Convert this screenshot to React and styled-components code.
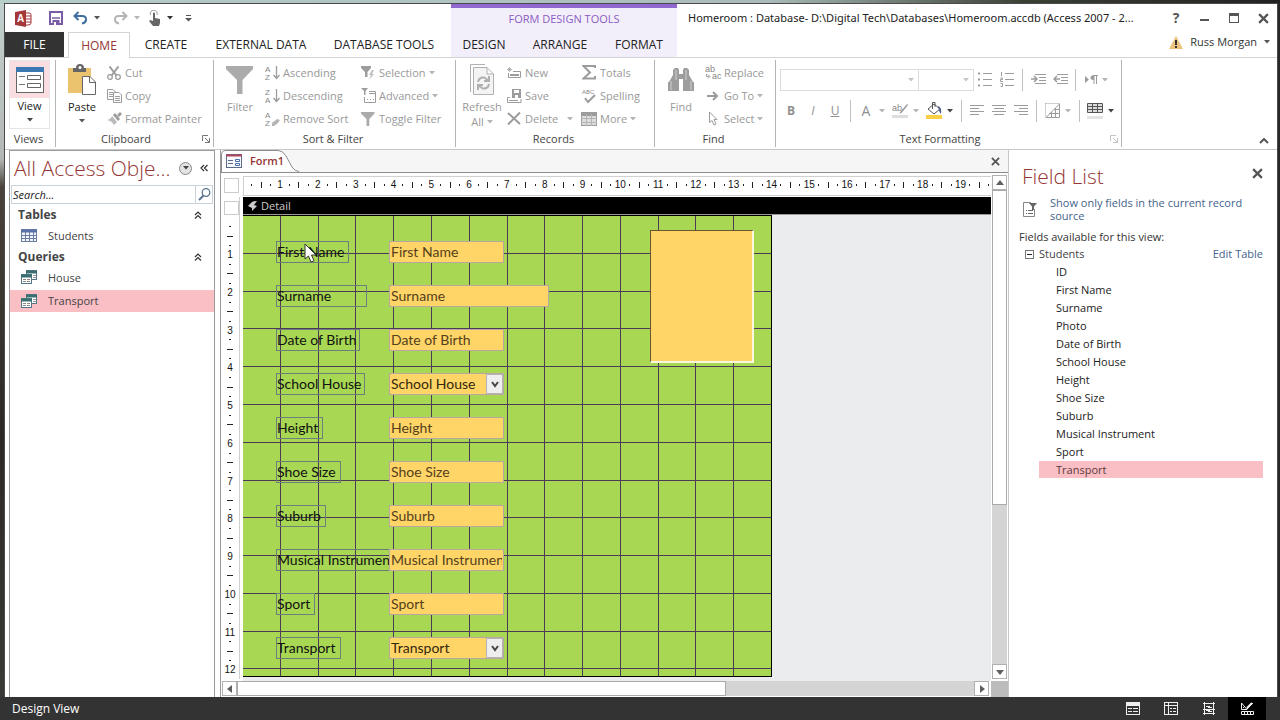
import React from 'react';
import styled, { createGlobalStyle, css } from 'styled-components';

const ribbonTabs = [
    { name: 'CREATE', width: 72 },
    { name: 'EXTERNAL DATA', width: 118 },
    { name: 'DATABASE TOOLS', width: 128 },
];

const designTabs = [
    { name: 'DESIGN', width: 66 },
    { name: 'ARRANGE', width: 86 },
    { name: 'FORMAT', width: 72 },
];

const formFields = [
    { id: 'first-name', label: 'First Name', labelWidth: 73 },
    { id: 'surname', label: 'Surname', labelWidth: 91, wide: true },
    { id: 'birth', label: 'Date of Birth', labelWidth: 84 },
    { id: 'house', label: 'School House', labelWidth: 89, combo: true },
    { id: 'height', label: 'Height', labelWidth: 47 },
    { id: 'shoe', label: 'Shoe Size', labelWidth: 65 },
    { id: 'suburb', label: 'Suburb', labelWidth: 50 },
    { id: 'instrument', label: 'Musical Instrument', labelWidth: 120 },
    { id: 'sport', label: 'Sport', labelWidth: 39 },
    { id: 'transport', label: 'Transport', labelWidth: 65, combo: true },
];

const listFields = [
    'ID', 'First Name', 'Surname', 'Photo', 'Date of Birth', 'School House', 'Height',
    'Shoe Size', 'Suburb', 'Musical Instrument', 'Sport', 'Transport',
];

const range = (from, to) => Array.from({ length: to - from + 1 }, (_, i) => from + i);

export default function App() {
    return (
        <Desktop>
            <GlobalStyle />
            <AppWindow>
                <Header />
                <Ribbon />
                <Workspace>
                    <NavigationPane />
                    <FormDesigner />
                    <FieldList />
                </Workspace>
            </AppWindow>
            <StatusBar />
        </Desktop>
    );
}

function Header() {
    return (
        <HeaderGrid>
            <HeaderColumn>
                <QuickAccess>
                    <QuickButton aria-label="Access" $width={34}><AccessLogo /></QuickButton>
                    <QuickButton aria-label="Save" $width={24}><SaveIcon /></QuickButton>
                    <QuickButton aria-label="Undo" $width={40}><UndoIcon /><Caret color="#555" /></QuickButton>
                    <QuickButton aria-label="Redo" $width={36}><RedoIcon /><Caret color="#b5b5b5" /></QuickButton>
                    <QuickButton aria-label="Touch mode" $width={36}><TouchIcon /><Caret color="#333" /></QuickButton>
                    <QuickButton aria-label="Customise" $width={28}><CustomiseIcon /></QuickButton>
                </QuickAccess>
                <TabRow>
                    <FileTab>FILE</FileTab>
                    <HomeTab>HOME</HomeTab>
                    {ribbonTabs.map(t => <Tab key={t.name} $width={t.width}>{t.name}</Tab>)}
                </TabRow>
            </HeaderColumn>
            <ContextColumn>
                <ContextTitle>FORM DESIGN TOOLS</ContextTitle>
                <TabRow>
                    {designTabs.map(t => <Tab key={t.name} $width={t.width}>{t.name}</Tab>)}
                </TabRow>
            </ContextColumn>
            <HeaderColumn>
                <TitleRow>
                    <WindowTitle>Homeroom : Database- D:\Digital Tech\Databases\Homeroom.accdb (Access 2007 - 2...</WindowTitle>
                    <WindowButton aria-label="Help"><HelpMark>?</HelpMark></WindowButton>
                    <WindowButton aria-label="Minimise"><MinimiseIcon /></WindowButton>
                    <WindowButton aria-label="Restore"><RestoreIcon /></WindowButton>
                    <WindowButton aria-label="Close"><CloseIcon size={11} weight={2} /></WindowButton>
                </TitleRow>
                <UserRow>
                    <WarningIcon />
                    <span>Russ Morgan</span>
                    <Caret color="#555" />
                </UserRow>
            </HeaderColumn>
        </HeaderGrid>
    );
}

function SmallCommand({ icon, children, caret, gap }) {
    return (
        <CommandButton>
            <IconSlot>{icon}</IconSlot>
            {children}
            {caret && <CaretSlot $gap={gap || 3}><Caret color="#b5b5b5" /></CaretSlot>}
        </CommandButton>
    );
}

function Ribbon() {
    return (
        <RibbonBar>
            <Group $width={51}>
                <GroupBody>
                    <ViewButton>
                        <ViewTop><ViewIcon /></ViewTop>
                        <LargeText>View</LargeText>
                        <Caret color="#444" />
                    </ViewButton>
                </GroupBody>
                <GroupLabel><span>Views</span></GroupLabel>
            </Group>
            <Group $width={158}>
                <GroupBody>
                    <LargeButton $dark>
                        <LargeIcon><PasteIcon /></LargeIcon>
                        <LargeText>Paste</LargeText>
                        <Caret color="#555" />
                    </LargeButton>
                    <CommandColumn $width={106}>
                        <SmallCommand icon={<CutIcon />}>Cut</SmallCommand>
                        <SmallCommand icon={<CopyIcon />}>Copy</SmallCommand>
                        <SmallCommand icon={<BrushIcon />}>Format Painter</SmallCommand>
                    </CommandColumn>
                </GroupBody>
                <GroupLabel><span>Clipboard</span><LauncherIcon color="#777" /></GroupLabel>
            </Group>
            <Group $width={242}>
                <GroupBody>
                    <LargeButton>
                        <LargeIcon><FunnelIcon size={28} /></LargeIcon>
                        <LargeText>Filter</LargeText>
                    </LargeButton>
                    <CommandColumn $width={96}>
                        <SmallCommand icon={<SortIcon top="A" bottom="Z" />}>Ascending</SmallCommand>
                        <SmallCommand icon={<SortIcon top="Z" bottom="A" />}>Descending</SmallCommand>
                        <SmallCommand icon={<SortIcon top="A" bottom="Z" eraser />}>Remove Sort</SmallCommand>
                    </CommandColumn>
                    <CommandColumn $width={92}>
                        <SmallCommand icon={<SelectionIcon />} caret>Selection</SmallCommand>
                        <SmallCommand icon={<AdvancedIcon />} caret>Advanced</SmallCommand>
                        <SmallCommand icon={<FunnelIcon size={14} />}>Toggle Filter</SmallCommand>
                    </CommandColumn>
                </GroupBody>
                <GroupLabel><span>Sort &amp; Filter</span></GroupLabel>
            </Group>
            <Group $width={199}>
                <GroupBody>
                    <LargeButton>
                        <LargeIcon><RefreshIcon /></LargeIcon>
                        <LargeText>Refresh</LargeText>
                        <LargeText>All <Caret color="#b5b5b5" /></LargeText>
                    </LargeButton>
                    <CommandColumn $width={75}>
                        <SmallCommand icon={<NewIcon />}>New</SmallCommand>
                        <SmallCommand icon={<SaveRecordIcon />}>Save</SmallCommand>
                        <SmallCommand icon={<DeleteIcon />} caret gap={9}>Delete</SmallCommand>
                    </CommandColumn>
                    <CommandColumn $width={68}>
                        <SmallCommand icon={<SigmaIcon />}>Totals</SmallCommand>
                        <SmallCommand icon={<SpellingIcon />}>Spelling</SmallCommand>
                        <SmallCommand icon={<MoreIcon />} caret>More</SmallCommand>
                    </CommandColumn>
                </GroupBody>
                <GroupLabel><span>Records</span></GroupLabel>
            </Group>
            <Group $width={121}>
                <GroupBody>
                    <LargeButton>
                        <LargeIcon><BinocularsIcon /></LargeIcon>
                        <LargeText>Find</LargeText>
                    </LargeButton>
                    <CommandColumn $width={70}>
                        <SmallCommand icon={<ReplaceIcon />}>Replace</SmallCommand>
                        <SmallCommand icon={<GoToIcon />} caret>Go To</SmallCommand>
                        <SmallCommand icon={<SelectIcon />} caret>Select</SmallCommand>
                    </CommandColumn>
                </GroupBody>
                <GroupLabel><span>Find</span></GroupLabel>
            </Group>
            <Group $width={346}>
                <FormatRows>
                    <ToolRow>
                        <FontCombo $width={139}>
                            <select aria-label="Font"><option /></select>
                            <Caret color="#c4c4c4" />
                        </FontCombo>
                        <FontCombo $width={55}>
                            <select aria-label="Font size"><option /></select>
                            <Caret color="#c4c4c4" />
                        </FontCombo>
                        <Tool aria-label="Bullets"><BulletsIcon /></Tool>
                        <Tool aria-label="Numbering"><BulletsIcon numbered /></Tool>
                        <Divider />
                        <Tool aria-label="Increase indent"><IndentIcon /></Tool>
                        <Tool aria-label="Decrease indent"><IndentIcon back /></Tool>
                        <Divider />
                        <Tool aria-label="Text direction"><DirectionIcon /></Tool>
                        <Caret color="#b5b5b5" />
                    </ToolRow>
                    <ToolRow>
                        <Tool><b>B</b></Tool>
                        <Tool><i>I</i></Tool>
                        <Tool><u>U</u></Tool>
                        <Divider />
                        <Tool $big>A</Tool><ToolCaret><Caret color="#b5b5b5" /></ToolCaret>
                        <Tool aria-label="Highlight"><HighlightIcon /></Tool><ToolCaret><Caret color="#b5b5b5" /></ToolCaret>
                        <Tool aria-label="Background colour"><BucketIcon /></Tool><ToolCaret><Caret color="#444" /></ToolCaret>
                        <Divider />
                        <Tool aria-label="Align left"><AlignIcon kind="left" /></Tool>
                        <Tool aria-label="Centre"><AlignIcon kind="center" /></Tool>
                        <Tool aria-label="Align right"><AlignIcon kind="right" /></Tool>
                        <Divider />
                        <Tool aria-label="Gridlines"><GridlinesIcon /></Tool><ToolCaret><Caret color="#b5b5b5" /></ToolCaret>
                        <Divider />
                        <Tool aria-label="Alternate row colour"><RowColourIcon /></Tool><ToolCaret><Caret color="#444" /></ToolCaret>
                    </ToolRow>
                </FormatRows>
                <GroupLabel><span>Text Formatting</span><LauncherIcon color="#c4c4c4" /></GroupLabel>
            </Group>
            <CollapseButton aria-label="Collapse ribbon">
                <svg width="10" height="6"><path d="M1 5 L5 1 L9 5" fill="none" stroke="#555" strokeWidth="2" /></svg>
            </CollapseButton>
        </RibbonBar>
    );
}

function NavigationPane() {
    return (
        <NavPanel>
            <NavHeader>
                <PaneTitle>All Access Obje...</PaneTitle>
                <RoundButton aria-label="Choose category"><Caret color="#444" /></RoundButton>
                <PlainButton aria-label="Shutter bar"><ChevronsIcon /></PlainButton>
            </NavHeader>
            <SearchBox>
                <input aria-label="Search" placeholder="Search..." />
                <PlainButton aria-label="Search objects"><SearchIcon /></PlainButton>
            </SearchBox>
            <NavGroup>Tables<ChevronsIcon up /></NavGroup>
            <NavItem href="#students"><TableIcon />Students</NavItem>
            <NavGroup>Queries<ChevronsIcon up /></NavGroup>
            <NavItem href="#house"><QueryIcon />House</NavItem>
            <NavItem href="#transport" $selected><QueryIcon />Transport</NavItem>
        </NavPanel>
    );
}

function RulerMarks({ from, to, vertical }) {
    return range(from, to).map(n => (
        <Centimetre key={n} $vertical={vertical}>
            <span><Mark $vertical={vertical} $size={2} /></span>
            <span><Mark $vertical={vertical} $size={6} /></span>
            <span><Mark $vertical={vertical} $size={2} /></span>
            <span>{n}</span>
        </Centimetre>
    ));
}

function FormDesigner() {
    const unit = 529 / 14;
    return (
        <Designer>
            <DocumentTabs>
                <DocumentTab>
                    <svg width="78" height="22" viewBox="0 0 78 22">
                        <path d="M0.5 22 V5 Q0.5 0.5 5 0.5 H57 Q62 0.5 65 6 L71 17 Q74 21.5 78 21.5" fill="#fff" stroke="#8c8c8c" />
                    </svg>
                    <DocumentName><FormIcon />Form1</DocumentName>
                </DocumentTab>
                <CloseDocument aria-label="Close form"><CloseIcon size={9} weight={2} /></CloseDocument>
            </DocumentTabs>
            <DesignGrid>
                <RulerCorner><Corner /></RulerCorner>
                <TopRuler><TopScale><RulerMarks from={1} to={20} /></TopScale></TopRuler>
                <VerticalScroll>
                    <ScrollButton aria-label="Scroll up"><Arrow dir="up" /></ScrollButton>
                    <VerticalThumb />
                    <ScrollTrack />
                    <ScrollButton aria-label="Scroll down"><Arrow dir="down" /></ScrollButton>
                </VerticalScroll>
                <SideRuler>
                    <Corner $short />
                    <SideScale><RulerMarks from={1} to={12} vertical /></SideScale>
                </SideRuler>
                <Surface>
                    <SectionBar>
                        <svg width="10" height="10"><path d="M0 5 L4 1 Q6 0 9 0 L6 4 L9 5 L4 10 V7 Z" fill="#ccc" /></svg>
                        Detail
                    </SectionBar>
                    <FormSection>
                        <GridLines aria-hidden="true">
                            {range(1, 13).map(n => <rect key={'v' + n} x={Math.round(n * unit) - 1} y="0" width="1" height="100%" />)}
                            {range(1, 12).map(n => <rect key={'h' + n} x="0" y={Math.round(n * unit) - 1} width="100%" height="1" />)}
                        </GridLines>
                        <FieldRows>
                            {formFields.map(f => (
                                <FieldRow key={f.id}>
                                    <LabelCell>
                                        <FieldLabel htmlFor={f.id} $width={f.labelWidth}>{f.label}</FieldLabel>
                                    </LabelCell>
                                    {f.combo ? (
                                        <ComboBox>
                                            <select id={f.id}><option>{f.label}</option></select>
                                            <ComboArrow>
                                                <svg width="8" height="7"><path d="M1 1 L4 5 L7 1" fill="none" stroke="#444" strokeWidth="2" /></svg>
                                            </ComboArrow>
                                        </ComboBox>
                                    ) : (
                                        <TextBox id={f.id} defaultValue={f.label} $wide={f.wide} />
                                    )}
                                </FieldRow>
                            ))}
                        </FieldRows>
                        <PhotoFrame />
                        <Pointer width="14" height="21" viewBox="0 0 14 21">
                            <path d="M1 1 V16 L4.500 13 L7 19 L10 17.800 L7.500 12 H12 Z" fill="#fff" stroke="#333" strokeWidth="1" />
                        </Pointer>
                    </FormSection>
                </Surface>
                <HorizontalScroll>
                    <ScrollButton aria-label="Scroll left"><Arrow dir="left" /></ScrollButton>
                    <HorizontalThumb />
                    <ScrollTrack />
                    <ScrollButton aria-label="Scroll right"><Arrow dir="right" /></ScrollButton>
                </HorizontalScroll>
                <ScrollCorner />
            </DesignGrid>
        </Designer>
    );
}

function FieldList() {
    return (
        <FieldPanel>
            <FieldHeader>
                <PaneTitle>Field List</PaneTitle>
                <PanelClose aria-label="Close field list"><CloseIcon size={11} weight={2} /></PanelClose>
            </FieldHeader>
            <SourceRow>
                <SourceIcon />
                <BlueLink href="#source">Show only fields in the current record source</BlueLink>
            </SourceRow>
            <Available>Fields available for this view:</Available>
            <TreeRow>
                <svg width="9" height="9"><rect x="0.5" y="0.5" width="8" height="8" fill="#fff" stroke="#777" /><path d="M2 4.500 H7" stroke="#222" /></svg>
                <span>Students</span>
                <BlueLink href="#edit">Edit Table</BlueLink>
            </TreeRow>
            <FieldItems>
                {listFields.map(name => (
                    <FieldItem key={name} $selected={name === 'Transport'}>{name}</FieldItem>
                ))}
            </FieldItems>
        </FieldPanel>
    );
}

function StatusBar() {
    return (
        <StatusRow>
            <StatusText>Design View</StatusText>
            <StatusButton aria-label="Form view">
                <svg width="14" height="13" fill="none" stroke="#eee"><rect x="0.5" y="0.5" width="13" height="12" /><path d="M0 2.500 H14 M0 1.500 H14 M0 3.500 H14 M2 6.500 H6 M2 9.500 H6 M7 6.500 H12 M7 9.500 H12" /></svg>
            </StatusButton>
            <StatusButton aria-label="Layout view">
                <svg width="14" height="13" fill="none" stroke="#eee"><rect x="0.5" y="0.5" width="13" height="12" /><path d="M0 3.500 H14 M4.500 0 V13 M6 6.500 H8 M6 9.500 H8 M9 6.500 H12 M9 9.500 H12" /></svg>
            </StatusButton>
            <StatusButton aria-label="Report view">
                <svg width="12" height="13" fill="none" stroke="#eee"><path d="M1.500 0 V13 M10.500 0 V13 M0 1.500 H12 M0 11.500 H12 M3 4.500 H7 M5 5.500 H9 M3 8.500 H7 M5 9.500 H9 M0 7.500 H12" /></svg>
            </StatusButton>
            <StatusButton aria-label="Design view" $active>
                <svg width="15" height="14" fill="none" stroke="#eee"><path d="M1.500 1 V7.500 H7 Z M3.500 5 V6 M6 8 L13 1" /><path d="M7 6 L12 1" strokeWidth="2" /><path d="M1.500 9.500 H13.500 V12.500 H1.500 Z M4.500 10 V12 M7.500 10 V12 M10.500 10 V12" /></svg>
            </StatusButton>
        </StatusRow>
    );
}

/* icons */

const gray = '#9c9c9c';

const Caret = ({ color }) => <svg width="6" height="4"><path d="M0 0 H6 L3 3.500 Z" fill={color} /></svg>;

const CloseIcon = ({ size, weight }) => (
    <svg width={size} height={size} viewBox="0 0 10 10"><path d="M1 1 L9 9 M9 1 L1 9" stroke="#555" strokeWidth={weight} /></svg>
);

const arrows = { up: 'M0 6 L4 1 L8 6 Z', down: 'M0 2 L4 7 L8 2 Z', left: 'M6 0 L1 4 L6 8 Z', right: 'M2 0 L7 4 L2 8 Z' };
const Arrow = ({ dir }) => <svg width="8" height="8"><path d={arrows[dir]} fill="#606060" /></svg>;

const AccessLogo = () => (
    <svg width="17" height="17" viewBox="0 0 17 17">
        <path d="M10 3 H14 Q16 3 16 4.500 V13 Q16 15 13 15 H10 Z" fill="#fff" stroke="#a4373a" />
        <path d="M10 6 H16 M10 9 H16 M10 12 H16" stroke="#a4373a" />
        <path d="M0 2 L11 0 V17 L0 15 Z" fill="#a4373a" />
        <LogoText x="2" y="12">A</LogoText>
    </svg>
);

const SaveIcon = () => (
    <svg width="14" height="14" viewBox="0 0 14 14">
        <path d="M1 1 H13 V13 H1 Z" fill="#fff" stroke="#7a5ba8" strokeWidth="2" />
        <path d="M3 7 H11" stroke="#7a5ba8" strokeWidth="1.500" />
        <path d="M3.500 9 H10.500 V14 H3.500 Z" fill="#7a5ba8" /><path d="M5 11 H7 V14 H5 Z" fill="#fff" />
    </svg>
);

const UndoIcon = () => (
    <svg width="15" height="14" viewBox="0 0 15 14" fill="none" stroke="#3f6f9f" strokeWidth="2">
        <path d="M5.500 1 L1.500 5 L5.500 9" /><path d="M2 5 H9 Q13.500 5 13 9 Q12.500 12 9 12.500" />
    </svg>
);

const RedoIcon = () => (
    <svg width="15" height="14" viewBox="0 0 15 14" fill="none" stroke="#b5b5b5" strokeWidth="2">
        <path d="M9.500 1 L13.500 5 L9.500 9" /><path d="M13 5 H6 Q1.500 5 2 9 Q2.500 12 6 12.500" />
    </svg>
);

const TouchIcon = () => (
    <svg width="12" height="16" viewBox="0 0 12 16">
        <path d="M1.500 5 A3.500 3.500 0 1 1 8 5" fill="none" stroke="#999" />
        <path d="M4 3 Q5 2 6 3 V8 L11 9 V13 L10 16 H4 L0 11 L1.500 10 L4 11 Z" fill="#666" />
    </svg>
);

const CustomiseIcon = () => <svg width="7" height="7"><path d="M1 0.500 H6" stroke="#555" /><path d="M0 3 H7 L3.500 6.500 Z" fill="#555" /></svg>;

const MinimiseIcon = () => <svg width="10" height="11"><path d="M0 7 H9" stroke="#555" strokeWidth="2" /></svg>;

const RestoreIcon = () => <svg width="10" height="10"><rect x="0.5" y="0.5" width="9" height="9" fill="#fff" stroke="#555" /><path d="M0 1.500 H10" stroke="#555" strokeWidth="3" /></svg>;

const WarningIcon = () => (
    <svg width="14" height="13" viewBox="0 0 14 13">
        <path d="M7 0 L14 13 H0 Z" fill="#edc37c" /><path d="M7 4 V9 M7 10 V12" stroke="#333" strokeWidth="2" />
    </svg>
);

const ViewIcon = () => (
    <svg width="28" height="26" viewBox="0 0 28 26">
        <rect x="0.5" y="0.5" width="27" height="25" fill="#fff" stroke="#666" />
        <rect width="28" height="5" fill="#3c78b4" />
        <path d="M3 9.500 H9 M3 17.500 H9" stroke="#777" />
        <path d="M11.500 8.500 H24.500 V12.500 H11.500 Z M11.500 16.500 H24.500 V20.500 H11.500 Z" fill="none" stroke="#666" />
    </svg>
);

const PasteIcon = () => (
    <svg width="28" height="31" viewBox="0 0 28 31">
        <path d="M0 4 H23 V29 H0 Z" fill="#ebc36f" />
        <path d="M5 8 V4 H8 Q8 0 12 0 Q16 0 16 4 H18 V8 Z" fill="#666" /><circle cx="12" cy="3.500" r="1.500" fill="#fff" />
        <path d="M14.500 12.500 H22 L27.500 18 V30.500 H14.500 Z" fill="#fff" stroke="#666" /><path d="M21.500 12.500 V18.500 H27.500" fill="none" stroke="#666" />
    </svg>
);

const CutIcon = () => (
    <svg width="14" height="14" viewBox="0 0 14 14" fill="none" stroke={gray}>
        <path d="M2.500 0.500 L9.500 9.500 M11.500 0.500 L4.500 9.500" strokeWidth="2" />
        <circle cx="3" cy="11" r="2.300" strokeWidth="1.300" /><circle cx="11" cy="11" r="2.300" strokeWidth="1.300" />
    </svg>
);

const CopyIcon = () => (
    <svg width="15" height="14" viewBox="0 0 15 14" fill="#fff" stroke={gray}>
        <path d="M0.500 0.500 H6 L8.500 3 V10.500 H0.500 Z M2 3.500 H6 M2 5.500 H6 M2 7.500 H6" />
        <path d="M6.500 3.500 H12 L14.500 6 V13.500 H6.500 Z M8 7.500 H13 M8 9.500 H13 M8 11.500 H13" />
    </svg>
);

const BrushIcon = () => (
    <svg width="15" height="13" viewBox="0 0 15 13">
        <path d="M10 3 L13 0 L15 2 L12 5 Z" fill={gray} /><path d="M6 3 L8 1 L13 7 L11 9 Z" fill={gray} />
        <path d="M5 4 L10 10 L7 13 Q5 9 0 8 Q4 7 5 4 Z" fill="#bbb" />
    </svg>
);

const FunnelIcon = ({ size }) => (
    <svg width={size} height={size} viewBox="0 0 28 28"><path d="M0 0 H27 V3 L16.500 14 V28 H11 V14 L0 3 Z" fill="#ababab" /></svg>
);

const SortIcon = ({ top, bottom, eraser }) => (
    <svg width="15" height="18" viewBox="0 0 15 18">
        <SvgText x="0" y="8">{top}</SvgText>
        <SvgText x="0" y="16">{bottom}</SvgText>
        {eraser
            ? <path d="M7 13 L12 9 L15 10 L13 13 L9 16 L7 16 Z" fill="#b5b5b5" />
            : <path d="M11.500 2 V14 M8.500 11 L11.500 14.500 L14.500 11" fill="none" stroke={gray} strokeWidth="1.300" />}
    </svg>
);

const SelectionIcon = () => (
    <svg width="14" height="14" viewBox="0 0 14 14">
        <path d="M0 0 H10 V2 L6.500 6 V11 H4 V6 L0 2 Z" fill={gray} /><path d="M11 4 L8 9 H10 L8 14 L13 8 H11 L13 4 Z" fill="#c0c0c0" />
    </svg>
);

const AdvancedIcon = () => (
    <svg width="15" height="15" viewBox="0 0 15 15">
        <path d="M0 0 H7 L4.500 3 V7 H3 V3 Z" fill={gray} />
        <path d="M8 3.500 H14.500 V14.500 H3.500 V9 M8 5.500 H14" fill="none" stroke={gray} />
        <path d="M6 11.500 H7 M9 11.500 H10 M12 11.500 H13" stroke={gray} />
    </svg>
);

const RefreshIcon = () => (
    <svg width="25" height="31" viewBox="0 0 25 31" fill="none" stroke="#b0b0b0">
        <path d="M0.500 28 V0.500 H15" />
        <path d="M3.500 3.500 H17 L23.500 10 V30.500 H3.500 Z M17 3.500 V10 H23.500" fill="#f4f4f4" />
        <path d="M8 18 Q9 13 14 13.500 L18 16 M19 12 V17 H14 M19 20 Q18 25 13 24.500 L9 22 M8 26 V21 H13" strokeWidth="2" />
    </svg>
);

const NewIcon = () => (
    <svg width="14" height="12" viewBox="0 0 14 12" fill="none" stroke={gray}>
        <path d="M2.500 0 V5 M0 2.500 H5 M1 1 L4 4 M4 1 L1 4" strokeWidth="0.700" />
        <path d="M6 4.500 H13.500 V10.500 H1.500 V6" /><path d="M3 8 H12" strokeWidth="2" />
    </svg>
);

const SaveRecordIcon = () => (
    <svg width="15" height="14" viewBox="0 0 15 14">
        <path d="M5 0 H14 V9 H5 Z" fill={gray} /><path d="M7 1 H12 V4 H7 Z M8 6 H11 V9 H8 Z" fill="#fff" />
        <path d="M3 8.500 H0.500 V13.500 H14 V10 M2 11.500 H11" fill="none" stroke={gray} />
    </svg>
);

const DeleteIcon = () => <svg width="14" height="13"><path d="M1 1 L13 12 M13 0.500 L1 12.500" stroke={gray} strokeWidth="2" /></svg>;

const SigmaIcon = () => <svg width="14" height="15"><path d="M13 3 V1 H1.500 L8 7.500 L1.500 13.500 H13 V11" fill="none" stroke={gray} strokeWidth="2" /></svg>;

const SpellingIcon = () => (
    <svg width="15" height="17" viewBox="0 0 15 17">
        <SvgText x="0" y="7" $size={6}>ABC</SvgText>
        <path d="M3 11 L6 15 L13 8" fill="none" stroke={gray} strokeWidth="2" />
    </svg>
);

const MoreIcon = () => (
    <svg width="16" height="14" viewBox="0 0 16 14" fill="none" stroke={gray}>
        <rect x="0.5" y="0.5" width="15" height="13" fill="#ddd" /><path d="M0 2 H16" strokeWidth="4" />
        <path d="M0 6.500 H16 M0 10.500 H16 M5.500 2 V14 M10.500 2 V14" stroke="#b5b5b5" />
    </svg>
);

const BinocularsIcon = () => (
    <svg width="26" height="24" viewBox="0 0 26 24" fill="#9d9d9d">
        <path d="M5 2 L7 0 H10 L11 2 V6 H15 V2 L16 0 H19 L21 2 V7 L25 14 H15 V11 H11 V14 H1 L5 7 Z" />
        <path d="M0 14 H11 V23 H0 Z M15 14 H26 V23 H15 Z" /><path d="M3 13 V22 M23 13 V22 M8 2 V12 M18 2 V12" stroke="#d0d0d0" />
    </svg>
);

const ReplaceIcon = () => (
    <svg width="17" height="18" viewBox="0 0 17 18">
        <SvgText x="0" y="8" $size={9}>ab</SvgText>
        <SvgText x="7" y="15" $size={9}>ac</SvgText>
        <path d="M1.500 10 V12.500 H4 M3 10.500 L5 12.500 L3 14.500" fill="none" stroke={gray} />
    </svg>
);

const GoToIcon = () => <svg width="12" height="10"><path d="M0 5 H10 M6 1 L10 5 L6 9" fill="none" stroke={gray} strokeWidth="2" /></svg>;

const SelectIcon = () => <svg width="10" height="15"><path d="M1.500 1 V11.500 L4 9.500 L6 14 L8 13 L6 8.500 H9 Z" fill="#fff" stroke={gray} /></svg>;

const BulletsIcon = ({ numbered }) => (
    <svg width="14" height="15" viewBox="0 0 14 15" stroke={gray}>
        <path d="M5 1.500 H14 M5 7.500 H14 M5 13.500 H14" />
        <path d={numbered ? 'M1.500 0 V4 M0.500 6 H2.500 V7.500 H0.500 V9.500 H3 M0.500 11.500 H2.500 V14.500 H0.500' : 'M0 1.500 H2 M0 7.500 H2 M0 13.500 H2'} strokeWidth={numbered ? 1 : 2} fill="none" />
    </svg>
);

const IndentIcon = ({ back }) => (
    <svg width="15" height="11" viewBox="0 0 15 11" fill="none" stroke={gray}>
        <path d="M4 0.500 H15 M8 3.500 H15 M8 6.500 H15 M4 9.500 H15" />
        <path d={back ? 'M7 5 H1 M4 2 L1 5 L4 8' : 'M0 5 H6 M3 2 L6 5 L3 8'} strokeWidth="1.500" />
    </svg>
);

const DirectionIcon = () => (
    <svg width="13" height="10" viewBox="0 0 13 10">
        <path d="M0 1 L4 4.500 L0 8 Z M9 0 V5 Q5 5 5.500 2.500 Q6 0 9 0 Z" fill={gray} /><path d="M9 0.500 H13 M9 0 V9 M11.500 0 V9" stroke={gray} />
    </svg>
);

const HighlightIcon = () => (
    <svg width="17" height="17" viewBox="0 0 17 17">
        <SvgText x="0" y="9" $size={9}>ab</SvgText>
        <path d="M15 2 L9 9 L7 12 L10 10.500 L16 3 Z" fill={gray} /><rect y="13" width="16" height="3" fill="#ddd" />
    </svg>
);

const BucketIcon = () => (
    <svg width="17" height="17" viewBox="0 0 17 17">
        <path d="M2 7 L8 2 L14 7 L8 12 Z" fill="#fff" stroke="#555" /><path d="M6.500 7 V0.500 H9 V5" fill="none" stroke="#555" />
        <path d="M12 4 Q16 5 15 12 Q13 10 13 8 Z" fill="#4b5a8c" /><rect y="13" width="16" height="4" fill="#f9cf45" />
    </svg>
);

const AlignIcon = ({ kind }) => {
    const inset = { left: [0, 9], center: [2, 12], right: [5, 14] }[kind];
    return (
        <svg width="14" height="11" stroke={gray}>
            <path d={`M0 0.500 H14 M${inset[0]} 3.500 H${inset[1]} M0 6.500 H14 M${inset[0]} 9.500 H${inset[1]}`} />
        </svg>
    );
};

const GridlinesIcon = () => (
    <svg width="15" height="15" viewBox="0 0 15 15" fill="none" stroke={gray}>
        <path d="M0.500 0.500 H14.500 V14 M0.500 0.500 V14.500" strokeDasharray="1 1" />
        <path d="M14.500 1 V14.500 H1 Z M4 10.500 H14 M9 6.500 H14 M6.500 9 V14 M10.500 5 V14" />
    </svg>
);

const RowColourIcon = () => (
    <svg width="16" height="16" viewBox="0 0 16 16">
        <path d="M0.500 0.500 H15.500 V9.500 H0.500 Z" fill="#ddd" /><path d="M0.500 0.500 H15.500 V9.500 H0.500 Z M0 3.500 H16 M0 6.500 H16 M5.500 0 V10 M10.500 0 V10" fill="none" stroke="#555" />
        <rect y="13" width="16" height="3" fill="#e4e4e4" />
    </svg>
);

const LauncherIcon = ({ color }) => (
    <svg width="8" height="8" fill="none" stroke={color}><path d="M0.500 6 V0.500 H6 M3 3 L7 7 M7.500 3 V7.500 H3" /></svg>
);

const ChevronsIcon = ({ up }) => (
    <svg width="8" height="8" viewBox="0 0 8 8" fill="none" stroke="#333" strokeWidth="1.200">
        <path d={up ? 'M1 4 L4 1 L7 4 M1 7.500 L4 4.500 L7 7.500' : 'M4 1 L1 4 L4 7 M7.500 1 L4.500 4 L7.500 7'} />
    </svg>
);

const SearchIcon = () => (
    <svg width="13" height="13" viewBox="0 0 13 13" fill="none" stroke="#5b7590">
        <circle cx="8" cy="4.500" r="3.800" strokeWidth="1.300" /><path d="M5.500 7.500 L1 12" strokeWidth="2" />
    </svg>
);

const TableIcon = () => (
    <svg width="16" height="13" viewBox="0 0 16 13" stroke="#6c7ea0">
        <rect x="0.5" y="0.5" width="15" height="12" fill="#f2f5fb" /><path d="M0 2 H16" strokeWidth="3" stroke="#5a72a8" />
        <path d="M0 6.500 H16 M0 9.500 H16 M4.500 3 V13 M8.500 3 V13 M12.500 3 V13" />
    </svg>
);

const QueryIcon = () => (
    <svg width="16" height="15" viewBox="0 0 16 15">
        <rect x="5.500" y="0.5" width="10" height="9" fill="#fff" stroke="#56788c" /><path d="M5 2 H16" stroke="#39706f" strokeWidth="3" />
        <path d="M12 5.500 H15 M12 7.500 H15" stroke="#999" />
        <rect x="0.500" y="4.500" width="10" height="9" fill="#fff" stroke="#56788c" /><path d="M0 6 H11" stroke="#39706f" strokeWidth="3" />
        <path d="M2 9.500 H5 M6 9.500 H9 M2 11.500 H5 M6 11.500 H9" stroke="#888" />
    </svg>
);

const FormIcon = () => (
    <svg width="16" height="14" viewBox="0 0 16 14">
        <rect x="0.5" y="0.5" width="15" height="13" fill="#f7f8fc" stroke="#5b6b8c" /><path d="M0 1.500 H16" stroke="#b3475a" strokeWidth="2" />
        <path d="M2 6.500 H7 M2 9.500 H7" stroke="#5b6b8c" /><path d="M9.500 5.500 H13.500 V7.500 H9.500 Z M9.500 9.500 H13.500 V11.500 H9.500 Z" fill="none" stroke="#4b6faf" />
    </svg>
);

const SourceIcon = () => (
    <svg width="15" height="16" viewBox="0 0 15 16">
        <path d="M8 1.500 H0.500 V15.500 H11.500 V8" fill="none" stroke="#888" /><path d="M3 9.500 H4 M5 9.500 H10 M3 12.500 H4 M5 12.500 H10" stroke="#666" />
        <path d="M6 2 H14 L11 5.500 V9 H9 V5.500 Z" fill="#666" />
    </svg>
);

const SvgText = styled.text`
    font-family: 'Liberation Sans', sans-serif;
    font-size: ${p => p.$size || 8}px;
    fill: #888;
`;

const LogoText = styled(SvgText)`
    font-size: 10px;
    font-weight: 700;
    fill: #fff;
`;

/* layout */

const GlobalStyle = createGlobalStyle`
    * { box-sizing: border-box; }
    body {
        margin: 0;
        font-family: 'Open Sans', 'Noto Sans', sans-serif;
        font-size: 11px;
        line-height: 14px;
        color: #444;
    }
    button, input, select { font: inherit; color: inherit; }
    button { display: flex; align-items: center; padding: 0; border: 0; background: none; white-space: nowrap; }
    svg { display: block; flex: none; }
    a { text-decoration: none; }
`;

const Desktop = styled.div`
    display: flex;
    flex-direction: column;
    min-height: 100vh;
    background: linear-gradient(90deg, #b7cdca 0, #a9bcb9 60%, #3a4034 80%, #222 100%) top / 100% 4px no-repeat,
        linear-gradient(180deg, #c2d2d0 0, #b4b8b4 22%, #4a423b 26%, #2c2925 60%, #3b3a38 100%) left / 4px 100% no-repeat,
        #26282a;
`;

const AppWindow = styled.div`
    display: flex;
    flex-direction: column;
    flex: 1;
    margin: 3px 2px 0 4px;
    border: 1px solid #4a4a4a;
    border-bottom: 0;
    background: #fff;
`;

const HeaderGrid = styled.header`
    display: grid;
    grid-template-columns: 446px 226px 1fr;
    border-bottom: 1px solid #d4d4d4;
`;

const HeaderColumn = styled.div`
    display: flex;
    flex-direction: column;
    min-width: 0;
`;

const QuickAccess = styled.div`
    display: flex;
    align-items: center;
    height: 28px;
    padding-left: 10px;
`;

const QuickButton = styled.button`
    gap: 6px;
    width: ${p => p.$width}px;
`;

const TabRow = styled.nav`
    display: flex;
    height: 25px;
    font-size: 12px;
`;

const Tab = styled.button`
    justify-content: center;
    width: ${p => p.$width}px;
    color: #222;
`;

const FileTab = styled(Tab)`
    width: 59px;
    margin-right: 4px;
    background: #333;
    color: #fff;
`;

const HomeTab = styled(Tab)`
    width: 62px;
    height: 26px;
    border: 1px solid #d4d4d4;
    border-bottom: 0;
    background: #fff;
    color: #943634;
`;

const ContextColumn = styled(HeaderColumn)`
    background: #f3effa;
`;

const ContextTitle = styled.div`
    height: 28px;
    padding-top: 4px;
    border-top: 4px solid #8f69cf;
    text-align: center;
    color: #8a5cc4;
`;

const TitleRow = styled.div`
    display: flex;
    align-items: center;
    gap: 3px;
    height: 28px;
    padding: 0 1px 0 11px;
`;

const WindowTitle = styled.div`
    flex: 1;
    overflow: hidden;
    white-space: nowrap;
    font-family: 'Noto Sans', sans-serif;
    color: #222;
`;

const WindowButton = styled.button`
    justify-content: center;
    width: 26px;
    height: 24px;
`;

const HelpMark = styled.b`
    font-size: 14px;
    color: #555;
`;

const UserRow = styled.div`
    display: flex;
    align-items: center;
    justify-content: flex-end;
    gap: 7px;
    height: 20px;
    padding-right: 7px;
    color: #333;
`;

const RibbonBar = styled.div`
    display: flex;
    height: 92px;
    padding: 2px 0;
    border-bottom: 1px solid #c8c8c8;
`;

const Group = styled.section`
    display: flex;
    flex: none;
    flex-direction: column;
    width: ${p => p.$width}px;
    border-right: 1px solid #b4b4b4;
`;

const GroupBody = styled.div`
    display: flex;
    height: 72px;
    padding-left: 2px;
`;

const GroupLabel = styled.div`
    display: flex;
    align-items: center;
    gap: 6px;
    height: 16px;
    padding-right: 3px;

    span {
        flex: 1;
        text-align: center;
    }
`;

const LargeButton = styled.button`
    flex-direction: column;
    width: 48px;
    color: ${p => p.$dark ? '#222' : '#999'};

    > svg { margin-top: 5px; }
`;

const LargeIcon = styled.span`
    display: flex;
    align-items: center;
    height: 39px;
`;

const LargeText = styled.span`
    display: flex;
    align-items: center;
    gap: 3px;
    height: 15px;
`;

const ViewButton = styled(LargeButton)`
    width: 41px;
    height: 69px;
    margin-left: 2px;
    border: 1px solid #e6e6e6;
    color: #222;
`;

const ViewTop = styled.span`
    display: flex;
    align-items: center;
    justify-content: center;
    width: 100%;
    height: 37px;
    background: #f9dde0;
`;

const CommandColumn = styled.div`
    flex: none;
    width: ${p => p.$width}px;
    padding-top: 1px;
`;

const CommandButton = styled.button`
    height: 23px;
    color: #999;
`;

const IconSlot = styled.span`
    display: flex;
    justify-content: center;
    width: 16px;
    margin-right: 3px;
`;

const CaretSlot = styled.span`
    margin-left: ${p => p.$gap}px;
`;

const FormatRows = styled.div`
    height: 72px;
    padding: 4px 0 0 4px;
`;

const ToolRow = styled.div`
    display: flex;
    align-items: center;
    height: 31px;
`;

const FontCombo = styled.div`
    display: flex;
    align-items: center;
    width: ${p => p.$width}px;
    height: 22px;
    padding-right: 4px;
    border: 1px solid #dcdcdc;

    & + & { border-left: 0; }

    select {
        flex: 1;
        min-width: 0;
        appearance: none;
        border: 0;
        background: none;
    }
`;

const Tool = styled.button`
    justify-content: center;
    width: 22px;
    height: 22px;
    font-size: ${p => p.$big ? 14 : 12}px;
    color: #909090;
`;

const ToolCaret = styled.span`
    width: 12px;
    padding-left: 2px;
`;

const Divider = styled.span`
    width: 1px;
    height: 22px;
    margin: 0 4px;
    background: #c0c0c0;
`;

const CollapseButton = styled.button`
    align-self: flex-end;
    margin: 0 8px 3px auto;
`;

const Workspace = styled.main`
    display: flex;
    flex: 1;
`;

const NavPanel = styled.aside`
    flex: none;
    width: 206px;
    margin: 0 5px 0 4px;
    border: 1px solid #9a9a9a;
    border-bottom: 0;
`;

const NavHeader = styled.div`
    display: flex;
    align-items: center;
    gap: 8px;
    height: 34px;
    padding: 0 6px 0 4px;
`;

const PaneTitle = styled.h2`
    flex: 1;
    margin: 0;
    font-size: 21px;
    font-weight: 300;
    line-height: 28px;
    white-space: nowrap;
    color: #943634;
`;

const PlainButton = styled.button`
    justify-content: center;
`;

const RoundButton = styled(PlainButton)`
    width: 13px;
    height: 13px;
    border: 1px solid #888;
    border-radius: 50%;
    background: #e2e2e2;
`;

const SearchBox = styled.div`
    display: flex;
    height: 19px;
    margin: 0 1px;
    border: 1px solid #c9d3dc;

    input {
        flex: 1;
        min-width: 0;
        padding: 0 1px;
        border: 0;
        font-style: italic;
    }

    input::placeholder { color: #222; }

    button {
        width: 17px;
        border-left: 1px solid #c9d3dc;
    }
`;

const NavGroup = styled.div`
    display: flex;
    align-items: center;
    justify-content: space-between;
    height: 21px;
    padding: 0 12px 0 8px;
    font-size: 12px;
    font-weight: 700;
`;

const NavItem = styled.a`
    display: flex;
    align-items: center;
    gap: 11px;
    height: 21px;
    padding-left: 11px;
    color: #444;

    ${p => p.$selected && css`
        height: 22px;
        margin-top: 2px;
        background: #f9bfc4;
    `}
`;

const Designer = styled.section`
    display: flex;
    flex: 1;
    flex-direction: column;
    min-width: 0;
    border-left: 1px solid #9a9a9a;
    border-right: 1px solid #c6c6c6;
`;

const DocumentTabs = styled.div`
    display: flex;
    align-items: center;
    justify-content: space-between;
    height: 23px;
    border-bottom: 1px solid #8c8c8c;
    background: #f6f6f6;
`;

const DocumentTab = styled.div`
    display: grid;
    height: 22px;

    > * { grid-area: 1 / 1; }
`;

const DocumentName = styled.span`
    display: flex;
    align-items: center;
    gap: 8px;
    padding-left: 5px;
    font-weight: 600;
    color: #943634;
`;

const CloseDocument = styled.button`
    margin-right: 8px;
`;

const DesignGrid = styled.div`
    display: grid;
    flex: 1;
    grid-template-columns: 22px 1fr 17px;
    grid-template-rows: 24px 1fr 16px;
`;

const RulerCorner = styled.div`
    display: flex;
    align-items: center;
    padding-left: 3px;
`;

const Corner = styled.div`
    flex: none;
    width: 15px;
    height: ${p => p.$short ? 14 : 15}px;
    border: 1px solid #ccc;
`;

const rulerFont = css`
    font-family: 'Liberation Sans', sans-serif;
    font-size: 10px;
    line-height: 12px;
    color: #111;
`;

const TopRuler = styled.div`
    ${rulerFont}
    overflow: hidden;
    margin: 3px 0 1px;
    padding-left: 3px;
    border: 1px solid #d0d0d0;
    border-right: 0;
`;

const TopScale = styled.div`
    display: grid;
    grid-template-columns: repeat(20, 1fr);
    width: 756px;
    height: 16px;
`;

const SideRuler = styled.div`
    ${rulerFont}
    overflow: hidden;
    height: 482px;
    margin: 0 3px;
    padding-top: 4px;
    border-right: 1px solid #d0d0d0;
`;

const SideScale = styled.div`
    display: grid;
    grid-template-rows: repeat(12, 1fr);
    width: 12px;
    height: 453px;
    margin-top: 7px;
`;

const Centimetre = styled.div`
    display: grid;
    min-width: 0;
    min-height: 0;
    ${p => p.$vertical ? 'grid-template-rows: repeat(4, 1fr);' : 'grid-template-columns: repeat(4, 1fr);'}

    span {
        display: flex;
        align-items: center;
        justify-content: center;
        min-width: 0;
        min-height: 0;
    }
`;

const Mark = styled.i`
    background: #222;
    ${p => p.$vertical ? `width: ${p.$size}px; height: 1px;` : `width: 1px; height: ${p.$size}px;`}
`;

const Surface = styled.div`
    overflow: hidden;
    background: #ebecee;
`;

const SectionBar = styled.div`
    display: flex;
    align-items: center;
    gap: 3px;
    height: 18px;
    padding-left: 5px;
    border-bottom: 1px solid #999;
    background: #000;
    color: #ccc;
`;

const FormSection = styled.div`
    position: relative;
    display: flex;
    justify-content: space-between;
    width: 529px;
    height: 462px;
    padding: 14px 17px 0 33px;
    border: solid #000;
    border-width: 1px 1px 1px 0;
    background: #a7d753;
`;

const GridLines = styled.svg`
    position: absolute;
    inset: 0;
    width: 100%;
    height: 100%;
    fill: #4b3a58;
`;

const FieldRows = styled.div`
    position: relative;
    display: grid;
    grid-auto-rows: 22px;
    row-gap: 22px;
    align-content: start;
    margin-top: 11px;
    font-family: Lato, sans-serif;
    font-size: 14px;
`;

const FieldRow = styled.div`
    display: flex;
`;

const LabelCell = styled.div`
    display: flex;
    overflow: hidden;
    width: 113px;
`;

const FieldLabel = styled.label`
    flex: none;
    width: ${p => p.$width}px;
    border: 1px solid #6d7f7a;
    line-height: 19px;
    white-space: nowrap;
    color: #111;
`;

const control = css`
    width: ${p => p.$wide ? 160 : 115}px;
    height: 22px;
    border: 1px solid #b8a6a0;
    background: #fed566;
    color: #54401c;
`;

const TextBox = styled.input`
    ${control}
    padding: 0 1px 2px;
`;

const ComboBox = styled.div`
    ${control}
    display: flex;

    select {
        flex: 1;
        min-width: 0;
        padding: 0 1px;
        appearance: none;
        border: 0;
        background: none;
        color: #33270f;
    }
`;

const ComboArrow = styled.span`
    display: flex;
    align-items: center;
    justify-content: center;
    width: 17px;
    border: 1px solid #b5b5b5;
    background: #eee;
`;

const PhotoFrame = styled.div`
    position: relative;
    width: 104px;
    height: 133px;
    border: 1px solid #6b5630;
    border-right: 2px solid #fbf6dd;
    border-bottom: 2px solid #fbf6dd;
    background: #fed566;
`;

const Pointer = styled.svg`
    position: absolute;
    left: 61px;
    top: 27px;
`;

const VerticalScroll = styled.div`
    display: flex;
    flex-direction: column;
    grid-column: 3;
    grid-row: 1 / 3;
    padding: 2px 1px;
    background: #fff;
`;

const HorizontalScroll = styled.div`
    display: flex;
    grid-column: 1 / 3;
    padding: 0 2px 1px 1px;
`;

const ScrollButton = styled.button`
    flex: none;
    justify-content: center;
    width: 15px;
    height: 15px;
    border: 1px solid #b0b0b0;
    background: #fff;
`;

const ScrollTrack = styled.div`
    flex: 1;
    background: #d4d4d4;
`;

const VerticalThumb = styled.div`
    height: 315px;
    border: 1px solid #aaa;
    background: #fff;
`;

const HorizontalThumb = styled(VerticalThumb)`
    width: 489px;
    height: 15px;
`;

const ScrollCorner = styled.div`
    background: #bcbcbc;
`;

const FieldPanel = styled.aside`
    flex: none;
    width: 268px;
    padding: 12px 14px 0 10px;
`;

const FieldHeader = styled.div`
    display: flex;
    align-items: flex-start;
    padding-left: 3px;
`;

const PanelClose = styled(PlainButton)`
    height: 22px;
`;

const SourceRow = styled.div`
    display: flex;
    align-items: center;
    gap: 12px;
    margin-top: 6px;
    padding-left: 4px;
    line-height: 13px;
`;

const BlueLink = styled.a`
    color: #44638c;
`;

const Available = styled.p`
    margin: 8px 0 1px;
    color: #333;
`;

const TreeRow = styled.div`
    display: flex;
    align-items: center;
    gap: 5px;
    height: 18px;
    padding-left: 6px;

    a { margin-left: auto; }
`;

const FieldItems = styled.ul`
    margin: 0 0 0 20px;
    padding: 0;
    list-style: none;
    color: #222;
`;

const FieldItem = styled.li`
    height: 18px;
    padding-left: 17px;
    line-height: 17px;
    ${p => p.$selected && 'height: 17px; background: #f9bfc4; color: #5c3a3c;'}
`;

const StatusRow = styled.footer`
    display: flex;
    align-items: center;
    height: 23px;
    padding: 0 14px 0 12px;
    background: #333;
    color: #fff;
`;

const StatusText = styled.span`
    flex: 1;
    font-size: 12px;
`;

const StatusButton = styled.button`
    justify-content: center;
    width: 38px;
    height: 23px;
    background: ${p => p.$active ? '#000' : 'none'};
`;
